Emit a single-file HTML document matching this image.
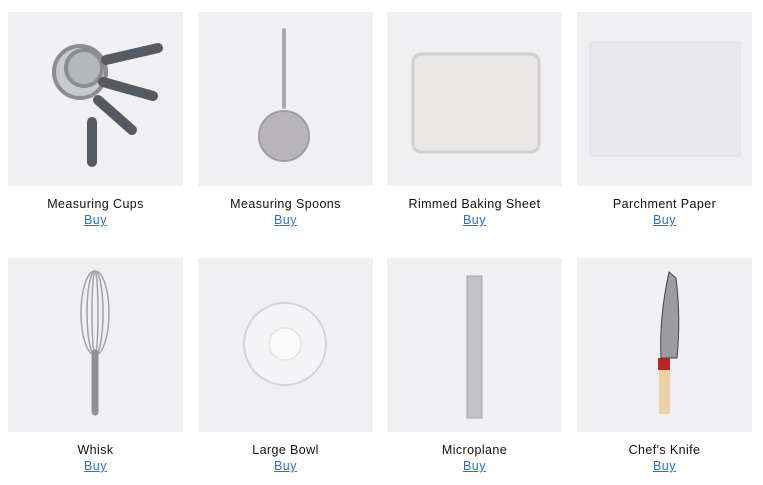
<!DOCTYPE html>
<html><head><style>
body{margin:0;background:#fff;width:763px;height:485px;position:relative;overflow:hidden;font-family:"Liberation Sans",sans-serif}
.t{position:absolute;width:175px;text-align:center}
.img{width:175px;height:174px;background:#f0f0f2;position:relative}
.img svg{position:absolute;left:0;top:0}
.n{margin-top:11px;font-size:12.5px;color:#111;letter-spacing:.4px;line-height:15px}
.b{font-size:12.5px;color:#2a73d0;text-decoration:underline;line-height:16px;letter-spacing:.5px}
</style></head><body>
<div class="t" style="left:8px;top:12px"><div class="img"><svg width="175" height="174">
<g stroke="#8a8c90" stroke-width="4" fill="none"><circle cx="72" cy="60" r="26" fill="#c7c9cc"/><circle cx="76" cy="56" r="18" fill="#b5b7ba"/></g>
<g stroke-linecap="round"><line x1="98" y1="48" x2="150" y2="36" stroke="#555a62" stroke-width="10"/><line x1="95" y1="70" x2="145" y2="84" stroke="#555a62" stroke-width="10"/><line x1="90" y1="88" x2="124" y2="118" stroke="#555a62" stroke-width="10"/><line x1="84" y1="110" x2="84" y2="150" stroke="#555a62" stroke-width="10"/></g>
</svg></div><div class="n">Measuring Cups</div><div class="b">Buy</div></div>
<div class="t" style="left:198px;top:12px"><div class="img"><svg width="175" height="174">
<line x1="86" y1="18" x2="86" y2="95" stroke="#a8aaad" stroke-width="4" stroke-linecap="round"/>
<circle cx="86" cy="124" r="25" fill="#b8b4b8" stroke="#9c9ea2" stroke-width="2"/></svg></div><div class="n">Measuring Spoons</div><div class="b">Buy</div></div>
<div class="t" style="left:387px;top:12px"><div class="img"><svg width="175" height="174">
<rect x="26" y="42" width="126" height="98" rx="8" fill="#eae7e6" stroke="#d3cfcc" stroke-width="3"/></svg></div><div class="n">Rimmed Baking Sheet</div><div class="b">Buy</div></div>
<div class="t" style="left:577px;top:12px"><div class="img"><svg width="175" height="174">
<rect x="13" y="30" width="150" height="114" fill="#e9e9ed" stroke="#e0e0e3" /></svg></div><div class="n">Parchment Paper</div><div class="b">Buy</div></div>

<div class="t" style="left:8px;top:258px"><div class="img"><svg width="175" height="174">
<g fill="none" stroke="#a0a2a6" stroke-width="1.5"><ellipse cx="87" cy="55" rx="14" ry="42"/><ellipse cx="87" cy="55" rx="8" ry="42"/><ellipse cx="87" cy="55" rx="3" ry="42"/></g>
<line x1="87" y1="95" x2="87" y2="154" stroke="#8e9094" stroke-width="7" stroke-linecap="round"/></svg></div><div class="n">Whisk</div><div class="b">Buy</div></div>
<div class="t" style="left:198px;top:258px"><div class="img"><svg width="175" height="174">
<circle cx="87" cy="86" r="41" fill="#f4f4f6" stroke="#d4d4d8" stroke-width="2"/><circle cx="87" cy="86" r="16" fill="#fafafa" stroke="#dcdce0"/></svg></div><div class="n">Large Bowl</div><div class="b">Buy</div></div>
<div class="t" style="left:387px;top:258px"><div class="img"><svg width="175" height="174">
<rect x="80" y="18" width="15" height="142" fill="#c0c2c5" stroke="#a4a6aa"/></svg></div><div class="n">Microplane</div><div class="b">Buy</div></div>
<div class="t" style="left:577px;top:258px"><div class="img"><svg width="175" height="174">
<path d="M92 14 L99 20 Q104 60 100 100 L84 100 Q82 60 92 14Z" fill="#9a9ca0" stroke="#444" stroke-width="1"/>
<rect x="81" y="100" width="12" height="12" fill="#b32a22"/><rect x="82" y="112" width="11" height="44" fill="#ead2a6"/></svg></div><div class="n">Chef's Knife</div><div class="b">Buy</div></div>
</body></html>
